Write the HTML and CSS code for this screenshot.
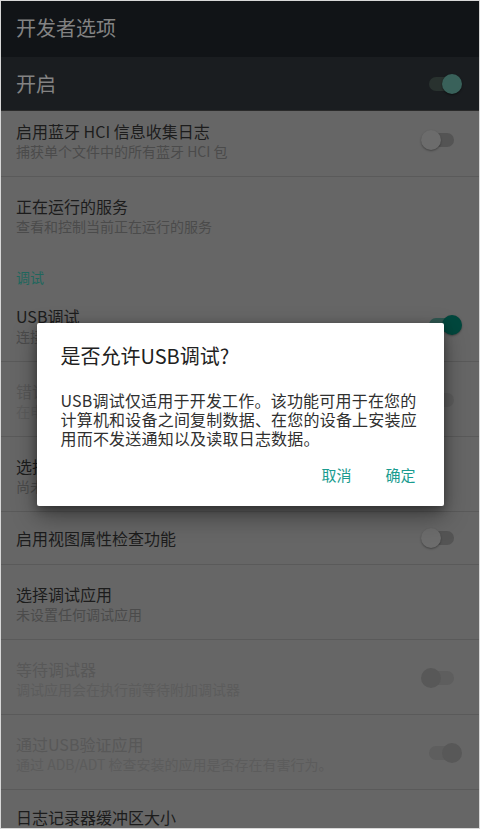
FILE: index.html
```html
<!DOCTYPE html>
<html lang="zh-CN">
<head>
<meta charset="utf-8">
<title>开发者选项</title>
<link rel="stylesheet" href="styles.css">
</head>
<body>
<div class="screen">
  <header class="appbar"><h1 class="appbar-title">开发者选项</h1></header>
  <div class="master">
    <span class="master-label">开启</span>
    <span class="switch on master-switch"><span class="track"></span><span class="thumb"></span></span>
  </div>
  <div class="list">
    <div class="list-inner">
      <div class="pref">
        <div class="pref-text"><div class="pref-title">启用蓝牙 HCI 信息收集日志</div><div class="pref-sub">捕获单个文件中的所有蓝牙 HCI 包</div></div>
        <span class="switch off"><span class="track"></span><span class="thumb"></span></span>
      </div>
      <div class="pref nodiv">
        <div class="pref-text"><div class="pref-title">正在运行的服务</div><div class="pref-sub">查看和控制当前正在运行的服务</div></div>
      </div>
      <div class="category">调试</div>
      <div class="pref">
        <div class="pref-text"><div class="pref-title">USB调试</div><div class="pref-sub">连接USB后启用调试模式</div></div>
        <span class="switch on usb-switch"><span class="track"></span><span class="thumb"></span></span>
      </div>
      <div class="pref disabled">
        <div class="pref-text"><div class="pref-title">错误报告快捷方式</div><div class="pref-sub">在电源菜单中显示用于提交错误报告的按钮</div></div>
        <span class="switch off"><span class="track"></span><span class="thumb"></span></span>
      </div>
      <div class="pref">
        <div class="pref-text"><div class="pref-title">选择模拟位置信息应用</div><div class="pref-sub">尚未设置模拟位置信息应用</div></div>
      </div>
      <div class="pref single">
        <div class="pref-text"><div class="pref-title">启用视图属性检查功能</div></div>
        <span class="switch off"><span class="track"></span><span class="thumb"></span></span>
      </div>
      <div class="pref">
        <div class="pref-text"><div class="pref-title">选择调试应用</div><div class="pref-sub">未设置任何调试应用</div></div>
      </div>
      <div class="pref disabled">
        <div class="pref-text"><div class="pref-title">等待调试器</div><div class="pref-sub">调试应用会在执行前等待附加调试器</div></div>
        <span class="switch off"><span class="track"></span><span class="thumb"></span></span>
      </div>
      <div class="pref disabled">
        <div class="pref-text"><div class="pref-title">通过USB验证应用</div><div class="pref-sub">通过 ADB/ADT 检查安装的应用是否存在有害行为。</div></div>
        <span class="switch on"><span class="track"></span><span class="thumb"></span></span>
      </div>
      <div class="pref last">
        <div class="pref-text"><div class="pref-title">日志记录器缓冲区大小</div></div>
      </div>
    </div>
  </div>
  <div class="dialog-layer">
    <div class="dialog">
      <div class="dialog-title">是否允许USB调试?</div>
      <div class="dialog-body">USB调试仅适用于开发工作。该功能可用于在您的计算机和设备之间复制数据、在您的设备上安装应用而不发送通知以及读取日志数据。</div>
      <div class="dialog-actions">
        <button class="dialog-btn">取消</button>
        <button class="dialog-btn">确定</button>
      </div>
    </div>
  </div>
</div>
</body>
</html>
```
FILE: styles.css
```css
html, body {
  margin: 0;
  padding: 0;
  background: #d8d8d8;
}
body {
  font-family: "Noto Sans CJK SC", "Noto Sans", sans-serif;
}
.screen {
  width: 480px;
  height: 829px;
  box-sizing: border-box;
  border: 1px solid #d8d8d8;
  position: relative;
  overflow: hidden;
  display: flex;
  flex-direction: column;
  background: #666666;
}
.appbar {
  height: 56px;
  flex-shrink: 0;
  box-sizing: border-box;
  background: #111417;
  display: flex;
  align-items: center;
  padding: 0 15px 3px;
}
.appbar-title {
  margin: 0;
  font-size: 20px;
  font-weight: normal;
  color: #838383;
  line-height: 24px;
}
.master {
  height: 53px;
  flex-shrink: 0;
  background: #1a1d20;
  border-bottom: 1px solid #2a2a2a;
  display: flex;
  align-items: center;
  justify-content: space-between;
  padding: 0 17px 0 15px;
}
.master-label {
  font-size: 20px;
  line-height: 24px;
  color: #838383;
}
.list {
  flex: 1;
  overflow: hidden;
}
.list-inner {
  margin-top: -9px;
}
.pref {
  display: flex;
  align-items: center;
  padding: 18px 17px 16px 15px;
  border-bottom: 1px solid #5a5a5a;
}
.pref.single {
  padding-top: 15px;
  padding-bottom: 15px;
}
.pref.nodiv {
  border-bottom: none;
  padding-bottom: 17px;
}
.pref.last {
  padding-top: 16px;
}
.pref-text {
  flex: 1;
  min-width: 0;
}
.pref-title {
  font-size: 16px;
  line-height: 22px;
  color: #1c1c1c;
  white-space: nowrap;
}
.pref-sub {
  font-size: 14px;
  line-height: 18px;
  color: #4b4b4b;
  white-space: nowrap;
}
.pref.disabled .pref-title {
  color: #585858;
}
.pref.disabled .pref-sub {
  color: #5c5c5c;
}
.category {
  padding: 15px 15px 0;
  font-size: 14px;
  line-height: 20px;
  color: #1f675d;
}
.switch {
  position: relative;
  width: 41px;
  height: 20px;
  flex-shrink: 0;
}
.switch .track {
  position: absolute;
  left: 8px;
  top: 3px;
  width: 25px;
  height: 14px;
  border-radius: 7px;
  background: #545454;
}
.switch .thumb {
  position: absolute;
  top: 0;
  width: 20px;
  height: 20px;
  border-radius: 50%;
  background: #6c6c6c;
  box-shadow: 0 1px 2px rgba(0, 0, 0, 0.35);
}
.switch.off .thumb {
  left: 0;
}
.switch.on .thumb {
  left: 21px;
}
.master-switch .track {
  background: #29322f;
}
.master-switch .thumb {
  background: #39615a;
  box-shadow: 0 1px 2px rgba(0, 0, 0, 0.5);
}
.usb-switch .track {
  background: #2f5650;
}
.usb-switch .thumb {
  background: #00473d;
}
.pref.disabled .switch .track {
  background: #5e5e5e;
}
.pref.disabled .switch .thumb {
  background: #585858;
  box-shadow: none;
}
.dialog-layer {
  position: absolute;
  inset: 0;
  display: flex;
  align-items: center;
  justify-content: center;
}
.dialog {
  width: 407px;
  background: #ffffff;
  border-radius: 2px;
  box-shadow: 0 10px 24px rgba(0, 0, 0, 0.4), 0 3px 8px rgba(0, 0, 0, 0.3);
}
.dialog-title {
  padding: 21px 24px 0;
  font-size: 20px;
  line-height: 24px;
  color: #212121;
}
.dialog-body {
  margin-top: 23px;
  padding: 0 20px 0 24px;
  font-size: 16px;
  line-height: 19px;
  letter-spacing: 0.2px;
  color: #303030;
}
.dialog-actions {
  display: flex;
  justify-content: flex-end;
  padding: 9px 11px 13px;
}
.dialog-btn {
  width: 64px;
  height: 36px;
  padding: 0;
  border: none;
  background: none;
  font-family: "Noto Sans CJK SC", "Noto Sans", sans-serif;
  font-size: 15px;
  line-height: 36px;
  color: #1a9c8f;
  text-align: center;
}
```
